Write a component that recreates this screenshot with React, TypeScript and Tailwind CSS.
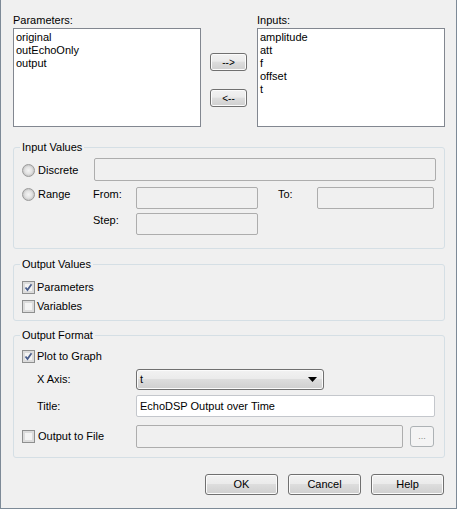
import React from 'react';

const BTN =
  "border border-[#707070] rounded-[3px] bg-[linear-gradient(#f2f2f2,#ebebeb_45%,#dddddd_50%,#cfcfcf)] shadow-[inset_0_0_0_1px_#fbfbfb] flex items-center justify-center";

const Radio = () => (
  <div className="w-[13px] h-[13px] rounded-full border border-[#9a9a9a] bg-[radial-gradient(circle_at_50%_50%,#f4f4f4_0%,#e2e2e2_45%,#c9c9c9_70%,#e9e9e9_100%)] shrink-0" />
);

const Check = ({ checked }: { checked?: boolean }) => (
  <div className="w-[13px] h-[13px] border border-[#8e8f8f] bg-[#f4f4f4] shadow-[inset_0_0_0_2px_#dcdcdc] shrink-0 flex items-center justify-center">
    {checked && (
      <svg width="9" height="9" viewBox="0 0 9 9">
        <path d="M1.5 4.5 L3.5 7 L7.5 1.2" fill="none" stroke="#4a5e8c" strokeWidth="1.8" />
      </svg>
    )}
  </div>
);

const Box = ({ className = "", white, children }: { className?: string; white?: boolean; children?: React.ReactNode }) => (
  <div
    className={`border border-[#adadad] rounded-[2px] flex items-center pl-[3px] ${white ? "bg-white border-[#c4c7cc]" : "bg-[#f0f0f0]"} ${className}`}
  >
    {children}
  </div>
);

const Group = ({ title, className = "", children }: { title: string; className?: string; children: React.ReactNode }) => (
  <fieldset className={`border border-[#d5dfe5] rounded-[3px] p-0 m-0 ${className}`}>
    <legend className="ml-[6px] px-[2px] leading-[13px] h-[13px]">{title}</legend>
    {children}
  </fieldset>
);

export default function App() {
  const params = ["original", "outEchoOnly", "output"];
  const inputs = ["amplitude", "att", "f", "offset", "t"];
  return (
    <div className="w-[457px] h-[509px] bg-[#f0f0f0] border-x border-b border-[#7d8a97] text-[11px] text-black font-['Liberation_Sans',Arial,sans-serif] pl-3 pr-[11px] pt-[14px] flex flex-col">
      {/* lists */}
      <div className="flex">
        <div className="w-[188px] flex flex-col">
          <div className="h-[14px] leading-[13px]">Parameters:</div>
          <div className="h-[99px] border border-[#828790] bg-white pt-[2px] pl-[2px] leading-[13px]">
            {params.map(p => <div key={p}>{p}</div>)}
          </div>
        </div>
        <div className="w-[56px] pt-[39px] pl-[9px] flex flex-col">
          <button className={`${BTN} w-[37px] h-[18px] text-[10px]`}>--&gt;</button>
          <button className={`${BTN} w-[37px] h-[18px] text-[10px] mt-[18px]`}>&lt;--</button>
        </div>
        <div className="w-[188px] flex flex-col">
          <div className="h-[14px] leading-[13px]">Inputs:</div>
          <div className="h-[99px] border border-[#828790] bg-white pt-[2px] pl-[2px] leading-[13px]">
            {inputs.map(p => <div key={p}>{p}</div>)}
          </div>
        </div>
      </div>

      {/* Input Values */}
      <Group title="Input Values" className="mt-[14px]">
        <div className="pl-[8px] pt-[4px] pb-[13px] leading-[13px]">
          <div className="flex items-start h-[23px]">
            <div className="w-[71px] mt-[6px] flex items-center gap-[3px]"><Radio />Discrete</div>
            <Box className="flex-1 h-[23px] ml-[1px] mr-[8px]" />
          </div>
          <div className="flex items-start h-[22px] mt-[6px]">
            <div className="w-[71px] mt-[1px] flex items-center gap-[3px]"><Radio />Range</div>
            <div className="w-[43px] mt-[1px]">From:</div>
            <Box className="w-[122px] h-[22px]" />
            <div className="w-[20px]" />
            <div className="w-[39px] mt-[1px]">To:</div>
            <Box className="flex-1 h-[22px] mr-[10px]" />
          </div>
          <div className="flex items-start h-[22px] mt-[4px]">
            <div className="w-[71px]" />
            <div className="w-[43px] mt-[1px]">Step:</div>
            <Box className="w-[122px] h-[22px]" />
          </div>
        </div>
      </Group>

      {/* Output Values */}
      <Group title="Output Values" className="mt-[9px]">
        <div className="pl-[8px] pt-[7px] pb-[4px]">
          <div className="flex items-center gap-[2px] h-[19px]"><Check checked />Parameters</div>
          <div className="flex items-center gap-[2px] h-[19px]"><Check />Variables</div>
        </div>
      </Group>

      {/* Output Format */}
      <Group title="Output Format" className="mt-[8px]">
        <div className="pl-[8px] pt-[5px] pb-[9px]">
          <div className="flex items-center gap-[2px] h-[19px]"><Check checked />Plot to Graph</div>
          <div className="flex items-center h-[21px] mt-[3px]">
            <div className="w-[114px] pl-[15px]">X Axis:</div>
            <div className={`${BTN} w-[188px] h-[21px] !justify-between pl-[3px] pr-[6px]`}>
              <span>t</span>
              <svg width="9" height="5" viewBox="0 0 9 5"><path d="M0 0 H9 L4.5 5 Z" fill="#000" /></svg>
            </div>
          </div>
          <div className="flex items-center h-[22px] mt-[5px]">
            <div className="w-[114px] pl-[15px]">Title:</div>
            <Box white className="w-[299px] h-[22px]">EchoDSP Output over Time</Box>
          </div>
          <div className="flex items-center h-[23px] mt-[8px]">
            <div className="w-[114px] flex items-center gap-[3px]"><Check />Output to File</div>
            <Box className="w-[267px] h-[23px]" />
            <div className="ml-[7px] w-[24px] h-[21px] border border-[#adb2b5] rounded-[3px] bg-[#f4f4f4] text-[#8a8a8a] text-[9px] flex items-center justify-center">...</div>
          </div>
        </div>
      </Group>

      {/* buttons */}
      <div className="flex justify-end gap-[10px] mt-[16px] pr-[1px]">
        <button className={`${BTN} w-[73px] h-[21px]`}>OK</button>
        <button className={`${BTN} w-[73px] h-[21px]`}>Cancel</button>
        <button className={`${BTN} w-[73px] h-[21px]`}>Help</button>
      </div>
    </div>
  );
}
